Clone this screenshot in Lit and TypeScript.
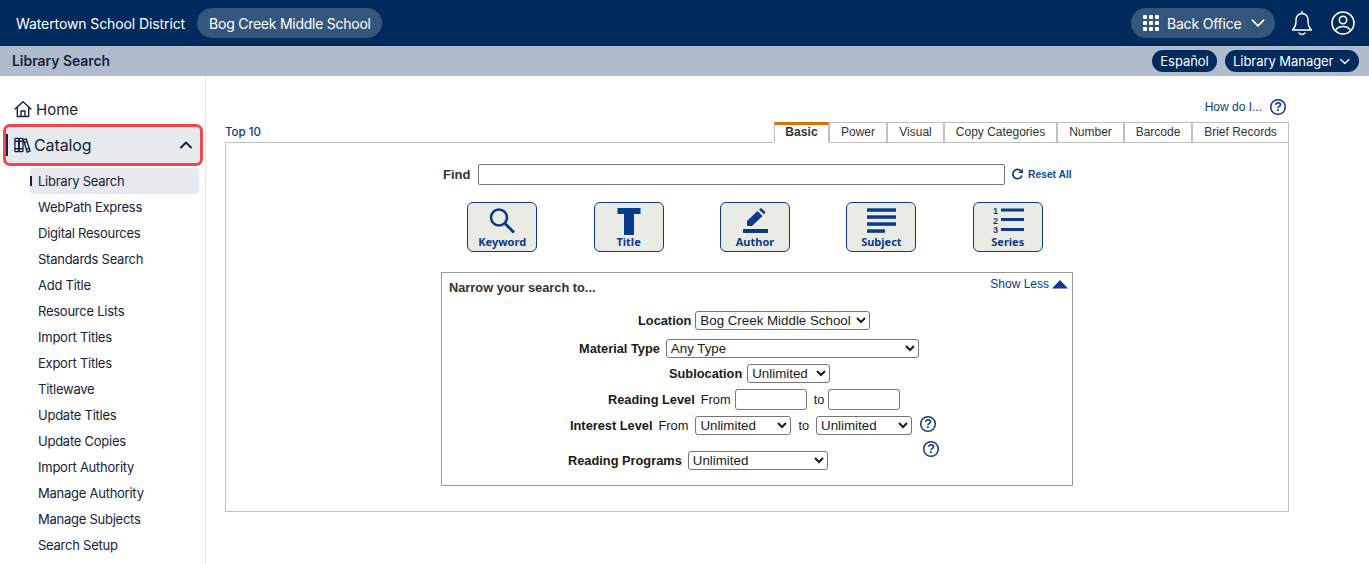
import { LitElement, html, css } from "lit";
import { customElement } from "lit/decorators.js";

const SUB = ["Library Search","WebPath Express","Digital Resources","Standards Search","Add Title","Resource Lists","Import Titles","Export Titles","Titlewave","Update Titles","Update Copies","Import Authority","Manage Authority","Manage Subjects","Search Setup"];
const TABS = ["Basic","Power","Visual","Copy Categories","Number","Barcode","Brief Records"];
const help = html`<svg class="help" viewBox="0 0 18 18" width="18" height="18"><circle cx="9" cy="9" r="7.3" fill="none" stroke="#0b3a8c" stroke-width="1.5"/><text x="9" y="13.4" text-anchor="middle" font-family="Liberation Sans" font-weight="700" font-size="12.5" fill="#0b3a8c">?</text></svg>`;
const chev = (c: string, w = 14, sw = 1.6) => html`<svg width="${w}" height="${w}" viewBox="0 0 14 14"><path d="M2 4.5 7 9.5 12 4.5" fill="none" stroke="${c}" stroke-width="${sw}" stroke-linecap="round" stroke-linejoin="round"/></svg>`;

@customElement("app-root")
export class AppRoot extends LitElement {
  static styles = css`
    :host { display: block; width: 1369px; height: 564px; overflow: hidden; background: #fff; font-family: "Inter", sans-serif; color: #14233c; }
    * { box-sizing: border-box; }
    .top { height: 46px; background: #002b5c; color: #fff; display: flex; align-items: center; padding: 0 14px 0 16px; font-size: 14px; letter-spacing: -0.1px; white-space: nowrap; }
    .pill { background: #35567c; border-radius: 15px; height: 30px; display: flex; align-items: center; }
    .school { margin-left: 12px; padding: 0 12px; width: 185px; letter-spacing: -0.25px; }
    .back { margin-left: auto; padding: 0 12px; gap: 8px; width: 144px; letter-spacing: -0.2px; }
    .grid { display: grid; grid-template-columns: repeat(3, 4px); gap: 2px; flex: none; }
    .grid i { width: 4px; height: 4px; background: #fff; border-radius: 1px; display: block; }
    .back svg { margin-left: auto; flex: none; }
    .bell { margin-left: 15px; display: block; }
    .user { margin-left: 17px; display: block; }
    .sub { height: 30px; background: #b0bccc; display: flex; align-items: center; padding: 0 10px 0 12px; }
    .sub b { font-size: 13.9px; font-weight: 600; color: #14233c; }
    .navy { background: #002b5c; color: #fff; border-radius: 11px; height: 22px; display: flex; align-items: center; font-size: 13px; padding: 0 8px; letter-spacing: -0.05px; white-space: nowrap; }
    .es { margin-left: auto; width: 65px; justify-content: center; }
    .mgr { margin-left: 8px; gap: 6px; width: 134px; }
    .body { display: flex; height: 488px; }
    .side { width: 206px; flex: none; border-right: 1px solid #e2e5ea; padding: 21px 3px 0; }
    .home { display: flex; align-items: center; height: 24px; padding-left: 11px; font-size: 15px; gap: 4px; }
    .cat { margin-top: 3px; height: 42px; width: 200px; border: 3px solid #f0474d; border-radius: 7px; background: #e6e9ee; display: flex; align-items: center; font-size: 16px; letter-spacing: -0.1px; padding-bottom: 1px; }
    .bar { width: 2px; height: 22px; background: #14233c; }
    .cat .bk { margin: 0 3px 0 6px; }
    .cat .up { margin-left: auto; margin-right: 7px; }
    .items { margin-top: 2px; padding-left: 27px; }
    .it { height: 26px; width: 169px; display: flex; align-items: center; font-size: 13px; padding-left: 8px; border-radius: 4px; position: relative; letter-spacing: -0.25px; }
    .it.on { background: #e6e9ee; }
    .it.on::before { content: ""; position: absolute; left: 0; top: 8px; width: 2px; height: 10px; background: #14233c; }
    .main { flex: 1; padding: 0 80px 0 19px; font-family: "Liberation Sans", sans-serif; font-size: 12px; }
    .how { display: flex; justify-content: flex-end; align-items: center; height: 46px; padding-top: 15px; gap: 7px; padding-right: 2px; color: #0b3a8c; }
    .tabrow { display: flex; align-items: flex-end; height: 20px; }
    .top10 { color: #0b3a8c; font-family: "Inter", sans-serif; font-size: 11.5px; font-weight: 500; margin-right: auto; align-self: center; }
    .tabs { display: flex; height: 20px; }
    .tab { border: 1px solid #c0c0c0; border-bottom: none; padding: 0 0 2px; display: flex; align-items: center; justify-content: center; color: #333; background: #fff; }
    .tab.on { border-top: 3px solid #e07000; border-bottom: 1px solid #fff; font-weight: 700; margin-bottom: -1px; height: 21px; position: relative; z-index: 1; padding-bottom: 3px; letter-spacing: 0.1px; }
    .panel { height: 370px; border: 1px solid #c0c0c0; padding-top: 20px; }
    .find { display: flex; align-items: center; height: 22px; margin-left: 217px; }
    .find label { font-size: 13px; font-weight: 700; color: #333; width: 35px; }
    .find input { width: 527px; height: 21px; border: 1px solid #767676; border-radius: 2px; padding: 0; background: #fff; }
    .reset { margin-left: 6px; display: flex; align-items: center; gap: 4px; font-weight: 700; color: #0b4a9c; font-size: 10.3px; }
    .btns { display: flex; margin: 17px 0 0 241.2px; gap: 56.4px; }
    .sb { width: 70px; height: 50px; background: #ebebe6; border: 1px solid #0b3a8c; border-radius: 6px; display: flex; flex-direction: column; align-items: center; color: #0b3a8c; font-family: "Noto Sans", sans-serif; font-weight: 700; font-size: 11px; line-height: 14px; }
    .sb svg { display: block; height: 28px; margin-top: 4px; }
    .narrow { margin: 20px 0 0 215px; width: 632px; height: 214px; border: 1px solid #999; position: relative; font-size: 12.8px; padding-top: 7px; }
    .nt { font-weight: 700; color: #333; font-size: 12.8px; padding-left: 7px; line-height: 15px; }
    .less { position: absolute; right: 4px; top: 4px; display: flex; align-items: center; gap: 3px; color: #0b3a8c; font-size: 12px; }
    .row { display: flex; align-items: center; height: 19px; white-space: nowrap; color: #1a1a1a; }
    .row b { font-weight: 700; }
    select, .lv { font: 13.33px "Liberation Sans", sans-serif; height: 19px; border: 1px solid #767676; border-radius: 3px; background: #fff; color: #1a1a1a; padding: 0; }
    .lv { width: 72px; height: 21px; }
    .row1 { margin: 16px 0 0 196px; }
    .row2 { margin-top: 9px; margin-left: 137px; }
    .row3 { margin-top: 6px; margin-left: 227px; }
    .row4 { margin-top: 7px; margin-left: 166px; }
    .row5 { margin-top: 7px; margin-left: 128px; }
    .row6 { margin-top: 16px; margin-left: 126px; }
    .m4 { margin-left: 4px; }
    .m5 { margin-left: 5px; }
    .m6 { margin-left: 6px; }
    .m7 { margin-left: 7px; }
    .w175 { width: 175px; } .w253 { width: 253px; } .w83 { width: 83px; } .w96 { width: 96px; } .w140 { width: 140px; }
    .h1 { position: absolute; left: 477px; top: 142px; }
    .h2 { position: absolute; left: 480px; top: 167px; }
    .help { display: block; }
  `;

  render() {
    const w: Record<string, number> = { Basic: 55, Power: 58, Visual: 57, "Copy Categories": 113, Number: 67, Barcode: 68, "Brief Records": 97 };
    return html`
      <div class="top">
        <span>Watertown School District</span>
        <div class="pill school">Bog Creek Middle School</div>
        <div class="pill back">
          <div class="grid">${Array.from({ length: 9 }, () => html`<i></i>`)}</div>
          <span>Back Office</span>${chev("#fff", 16, 1.3)}
        </div>
        <svg class="bell" width="24" height="26" viewBox="0 0 24 26"><path d="M2.500 20c2-2 3.500-4 3.500-8V9.500a6 6 0 0 1 12 0V12c0 4 1.500 6 3.500 8Z" fill="none" stroke="#fff" stroke-width="1.400" stroke-linejoin="round"/><path d="M9 23c1.800 1.800 4.200 1.800 6 0" fill="none" stroke="#fff" stroke-width="1.400" stroke-linecap="round"/><path d="M12 3.500V1.500" stroke="#fff" stroke-width="1.400" stroke-linecap="round"/></svg>
        <svg class="user" width="24" height="24" viewBox="0 0 24 24"><circle cx="12" cy="12" r="11" fill="none" stroke="#fff" stroke-width="1.500"/><circle cx="12" cy="9" r="3.700" fill="none" stroke="#fff" stroke-width="1.500"/><path d="M4.500 19.500c1.500-3 4.500-4 7.500-4s6 1 7.500 4" fill="none" stroke="#fff" stroke-width="1.500"/></svg>
      </div>
      <div class="sub">
        <b>Library Search</b>
        <div class="navy es">Español</div>
        <div class="navy mgr">Library Manager ${chev("#fff", 13)}</div>
      </div>
      <div class="body">
        <nav class="side">
          <div class="home">
            <svg width="18" height="18" viewBox="0 0 18 18"><path d="M1 9 9 1.800 17 9 M3.300 7.500V16.500H14.700V7.500 M7 16.500V11H11V16.500" fill="none" stroke="#14233c" stroke-width="1.400" stroke-linejoin="round" stroke-linecap="round"/></svg>
            Home
          </div>
          <div class="cat">
            <div class="bar"></div>
            <svg class="bk" width="17" height="18" viewBox="0 0 18 18"><g fill="none" stroke="#14233c" stroke-width="1.400"><rect x="1" y="2" width="4" height="14" rx=".6"/><rect x="5.500" y="2" width="4" height="14" rx=".6"/><path d="M10 3.500 13 2.500 17 15.500 14 16.500Z"/><path d="M1 5h4M1 13h4M5.500 5h4M5.500 13h4M11 6.500l3-1M13.500 13.500l3-1"/></g></svg>
            Catalog
            <svg class="up" width="14" height="14" viewBox="0 0 14 14"><path d="M2 9.500 7 4.500 12 9.500" fill="none" stroke="#14233c" stroke-width="2" stroke-linecap="round" stroke-linejoin="round"/></svg>
          </div>
          <div class="items">
            ${SUB.map((s, i) => html`<div class="it ${i === 0 ? "on" : ""}">${s}</div>`)}
          </div>
        </nav>
        <main class="main">
          <div class="how">How do I... ${help}</div>
          <div class="tabrow">
            <span class="top10">Top 10</span>
            <div class="tabs">${TABS.map((t, i) => html`<div class="tab ${i === 0 ? "on" : ""}" style="width:${w[t]}px">${t}</div>`)}</div>
          </div>
          <div class="panel">
            <div class="find">
              <label>Find</label>
              <input type="text" />
              <span class="reset"><svg width="13" height="14" viewBox="0 0 14 14"><path d="M11.800 8.500A5 5 0 1 1 10.500 3.500" fill="none" stroke="#0b3a8c" stroke-width="1.800"/><path d="M12.800 1v5h-5Z" fill="#0b3a8c"/></svg>Reset All</span>
            </div>
            <div class="btns">
              <div class="sb"><svg width="28" height="28" viewBox="0 0 28 28"><circle cx="11" cy="10.500" r="8" fill="none" stroke="#0b3a8c" stroke-width="2.600"/><path d="M17 16.500 26 25.500" stroke="#0b3a8c" stroke-width="3"/></svg>Keyword</div>
              <div class="sb"><svg width="24" height="28" viewBox="0 0 24 28"><path d="M0.500 1H23.500V7H17V28H7V7H0.500Z" fill="#0b3a8c"/></svg>Title</div>
              <div class="sb"><svg width="26" height="28" viewBox="0 0 26 28"><path d="M5 19V14L15.500 4 20.500 9 10 19Z M17 2.500 19 1 23.500 5 22 7.500Z" fill="#0b3a8c"/><rect x="1" y="22" width="25" height="4" fill="#0b3a8c"/></svg>Author</div>
              <div class="sb"><svg width="30" height="28" viewBox="0 0 30 28"><g fill="#0b3a8c"><rect x="1" y="1.300" width="29" height="3.500"/><rect x="1" y="8.300" width="29" height="3.500"/><rect x="1" y="15.300" width="29" height="3.500"/><rect x="1" y="22.300" width="18" height="3.500"/></g></svg>Subject</div>
              <div class="sb"><svg width="32" height="28" viewBox="0 0 32 28"><g fill="#0b3a8c"><text x="1" y="7" font-size="9" font-weight="700" font-family="Liberation Sans">1</text><text x="1" y="16.500" font-size="9" font-weight="700" font-family="Liberation Sans">2</text><text x="1" y="26" font-size="9" font-weight="700" font-family="Liberation Sans">3</text><rect x="9" y="1.500" width="23" height="3"/><rect x="9" y="11" width="23" height="3"/><rect x="9" y="21" width="23" height="3"/></g></svg>Series</div>
            </div>
            <div class="narrow">
              <div class="nt">Narrow your search to...</div>
              <div class="less">Show Less <svg width="16" height="10" viewBox="0 0 16 10"><path d="M0 9.500 8 1 16 9.500Z" fill="#0b3a8c"/></svg></div>
              <div class="row row1"><b>Location</b><select class="m4 w175"><option>Bog Creek Middle School</option></select></div>
              <div class="row row2"><b>Material Type</b><select class="m6 w253"><option>Any Type</option></select></div>
              <div class="row row3"><b>Sublocation</b><select class="m5 w83"><option>Unlimited</option></select></div>
              <div class="row row4"><b>Reading Level</b><span class="m6">From</span><input class="lv m4" /><span class="m7">to</span><input class="lv m4" /></div>
              <div class="row row5"><b>Interest Level</b><span class="m6">From</span><select class="m7 w96"><option>Unlimited</option></select><span class="m7">to</span><select class="m7 w96"><option>Unlimited</option></select></div>
              <div class="h1">${help}</div>
              <div class="h2">${help}</div>
              <div class="row row6"><b>Reading Programs</b><select class="m6 w140"><option>Unlimited</option></select></div>
            </div>
          </div>
        </main>
      </div>
    `;
  }
}
